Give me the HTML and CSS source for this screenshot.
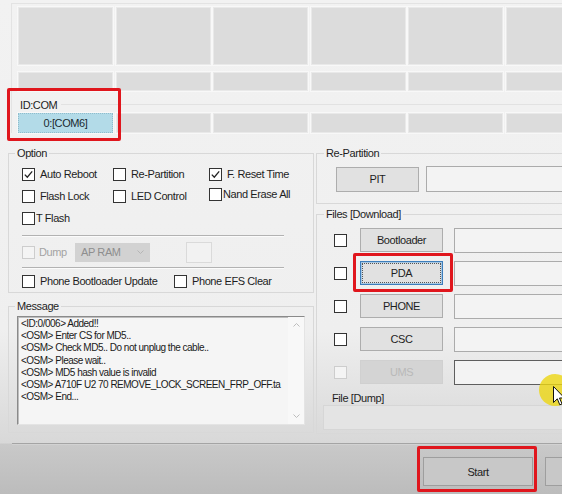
FILE: index.html
```html
<!DOCTYPE html>
<html>
<head>
<meta charset="utf-8">
<link rel="stylesheet" href="styles.css">
</head>
<body>
<div class="window">
  <section class="devices">
    <div class="dev-grid">
      <div class="cell"></div><div class="cell"></div><div class="cell"></div><div class="cell"></div><div class="cell"></div><div class="cell"></div>
      <div class="cell"></div><div class="cell"></div><div class="cell"></div><div class="cell"></div><div class="cell"></div><div class="cell"></div>
    </div>
    <div class="idcom-head"><span>ID:COM</span><span class="line"></span></div>
    <div class="com-grid">
      <div class="cell com-active">0:[COM6]</div><div class="cell"></div><div class="cell"></div><div class="cell"></div><div class="cell"></div><div class="cell"></div>
    </div>
  </section>

  <div class="lower">
    <div class="col-left">
      <fieldset class="grp option">
        <legend>Option</legend>
        <div class="opt-grid">
          <label class="chk"><span class="cb"><svg viewBox="0 0 11 11"><path d="M1.8 5.6 L4.3 8.2 L9.2 2.4"/></svg></span>Auto Reboot</label>
          <label class="chk"><span class="cb"></span>Re-Partition</label>
          <label class="chk"><span class="cb"><svg viewBox="0 0 11 11"><path d="M1.8 5.6 L4.3 8.2 L9.2 2.4"/></svg></span>F. Reset Time</label>
          <label class="chk"><span class="cb"></span>Flash Lock</label>
          <label class="chk"><span class="cb"></span>LED Control</label>
          <label class="chk tight up"><span class="cb"></span>Nand Erase All</label>
          <label class="chk tight"><span class="cb"></span>T Flash</label>
        </div>
        <div class="sep"></div>
        <div class="dump-row">
          <span class="cb disabled"></span>
          <span class="dump-label">Dump</span>
          <span class="select">AP RAM<svg class="sel-arrow" viewBox="0 0 7 4"><path d="M0.5 0.5 L3.5 3.5 L6.5 0.5"/></svg></span>
          <span class="small-box"></span>
        </div>
        <div class="sep sep2"></div>
        <div class="phone-row">
          <label class="chk pbu"><span class="cb"></span>Phone Bootloader Update</label>
          <label class="chk"><span class="cb"></span>Phone EFS Clear</label>
        </div>
      </fieldset>

      <fieldset class="grp message">
        <legend>Message</legend>
        <div class="log">
          <div class="log-text">
            <div>&lt;ID:0/006&gt; Added!!</div>
            <div>&lt;OSM&gt; Enter CS for MD5..</div>
            <div>&lt;OSM&gt; Check MD5.. Do not unplug the cable..</div>
            <div>&lt;OSM&gt; Please wait..</div>
            <div>&lt;OSM&gt; MD5 hash value is invalid</div>
            <div>&lt;OSM&gt; A710F U2 70 REMOVE_LOCK_SCREEN_FRP_OFF.ta</div>
            <div>&lt;OSM&gt; End...</div>
          </div>
          <div class="log-scroll">
            <svg viewBox="0 0 7 4"><path d="M0.5 3.5 L3.5 0.5 L6.5 3.5"/></svg>
            <svg viewBox="0 0 7 4"><path d="M0.5 0.5 L3.5 3.5 L6.5 0.5"/></svg>
          </div>
        </div>
      </fieldset>
    </div>

    <div class="col-right">
      <fieldset class="grp repart">
        <legend>Re-Partition</legend>
        <div class="pit-row">
          <button class="btn file-btn">PIT</button>
          <span class="field pit-field"></span>
        </div>
      </fieldset>

      <fieldset class="grp files">
        <legend>Files [Download]</legend>
        <div class="file-rows">
          <div class="file-row"><span class="cb"></span><button class="btn file-btn">Bootloader</button><span class="field"></span></div>
          <div class="file-row"><span class="cb"></span><button class="btn file-btn focused">PDA</button><span class="field"></span></div>
          <div class="file-row"><span class="cb"></span><button class="btn file-btn">PHONE</button><span class="field"></span></div>
          <div class="file-row"><span class="cb"></span><button class="btn file-btn">CSC</button><span class="field"></span></div>
          <div class="file-row"><span class="cb disabled"></span><button class="btn file-btn off">UMS</button><span class="field dark"></span></div>
        </div>
        <div class="dump-title">File [Dump]</div>
        <div class="dump-field"></div>
      </fieldset>
    </div>
  </div>

  <div class="bottom-line"></div>
  <div class="bottom">
    <button class="btn big">Start</button>
    <button class="btn big"></button>
  </div>

  <div class="mark mark-com"></div>
  <div class="mark mark-pda"></div>
  <div class="mark mark-start"></div>
  <div class="halo"></div>
  <svg class="pointer" viewBox="0 0 12 20"><path d="M0.5 0.5 L0.5 16.5 L4.3 12.8 L6.8 18.8 L9 17.9 L6.5 12 L11.5 12 Z"/></svg>
</div>
</body>
</html>
```

FILE: styles.css
```css
* { box-sizing: border-box; }
html, body { margin: 0; padding: 0; }
body {
  width: 562px;
  height: 494px;
  overflow: hidden;
  font-family: "Liberation Sans", Arial, sans-serif;
  font-size: 11px;
  letter-spacing: -0.4px;
  color: #1e1e1e;
  background: linear-gradient(to bottom, #f2f2f2 0, #efefef 330px, #d8d8d8 443px, #c9c9c9 444px, #bcbcbc 494px);
}
.window { position: relative; width: 562px; height: 494px; overflow: hidden; }

/* device slots */
.devices {
  margin: 3px 0 0 11px;
  border-top: 1px solid #e3e3e3;
  border-left: 1px solid #e3e3e3;
  padding: 3px 0 0 6px;
}
.dev-grid {
  display: grid;
  grid-template-columns: repeat(6, 95px);
  grid-template-rows: 58px 19px;
  column-gap: 2.5px;
  row-gap: 7px;
}
.cell {
  background: #dcdcdc;
  border: 1px solid #e9e9e9;
  box-shadow: 0 0 0 1px #f8f8f8;
}
.idcom-head {
  display: flex;
  align-items: center;
  height: 13px;
  margin-top: 7px;
  padding-left: 2px;
}
.idcom-head .line { flex: 1; border-top: 1px solid #e2e2e2; margin-left: 4px; }
.com-grid {
  display: grid;
  grid-template-columns: repeat(6, 95px);
  column-gap: 2.5px;
  height: 20px;
  margin-top: 2px;
}
.com-active {
  background: #b3dbe8;
  border: 1px dotted #8fbccc;
  display: flex;
  align-items: center;
  justify-content: center;
  color: #1a2a30;
}

/* lower area */
.lower {
  display: flex;
  gap: 2px;
  margin-top: 14px;
  padding-left: 8px;
}
.col-left { width: 306px; flex: none; }
.col-right { width: 270px; flex: none; }

fieldset.grp {
  margin: 0;
  padding: 0;
  min-width: 0;
  border: 1px solid #d8d8d8;
}
fieldset.grp > legend {
  padding: 0 2px;
  margin-left: 6px;
  height: 13px;
  line-height: 13px;
}
.col-right fieldset.grp > legend { margin-left: 7px; }

/* checkboxes */
.chk { display: flex; align-items: center; gap: 5px; white-space: nowrap; }
.chk.tight { gap: 1px; }
.chk.up { margin-top: -4px; }
.cb {
  width: 13px;
  height: 13px;
  flex: none;
  border: 1px solid #333;
  background: #fff;
  display: flex;
}
.cb svg { width: 11px; height: 11px; fill: none; stroke: #222; stroke-width: 1.3; }
.cb.disabled { border-color: #cdcdcd; background: #f4f4f4; }

/* option */
.opt-grid {
  display: grid;
  grid-template-columns: 91px 96px 1fr;
  grid-auto-rows: 22px;
  padding: 3px 0 0 13px;
}
.sep {
  margin: 6px 0 0 13px;
  width: 262px;
  border-top: 1px solid #b2b2b2;
  border-bottom: 1px solid #fbfbfb;
}
.sep2 { margin-top: 4px; }
.dump-row {
  display: flex;
  align-items: center;
  height: 22px;
  margin-top: 4px;
  padding-left: 13px;
  color: #a3a3a3;
}
.dump-label { width: 40px; padding-left: 4px; }
.select {
  position: relative;
  width: 75px;
  height: 19px;
  background: #d2d2d2;
  color: #8e8e8e;
  display: flex;
  align-items: center;
  padding-left: 6px;
}
.sel-arrow {
  width: 7px;
  height: 4px;
  margin-left: auto;
  margin-right: 6px;
  fill: none;
  stroke: #b5b5b5;
  stroke-width: 1;
}
.small-box {
  width: 26px;
  height: 21px;
  margin-left: 36px;
  border: 1px solid #dadada;
  background: #f2f2f2;
}
.phone-row {
  display: flex;
  align-items: center;
  height: 20px;
  margin: 2px 0 1px;
  padding-left: 13px;
}
.pbu { width: 152px; }

/* message */
.message { margin-top: 7px !important; }
.log {
  display: flex;
  margin: 3px 0 7px 8px;
  width: 288px;
  height: 109px;
  background: #f5f5f5;
  border: 1px solid;
  border-color: #8a8a8a #e4e4e4 #e4e4e4 #8a8a8a;
  box-shadow: inset 1px 1px 0 #bdbdbd;
}
.log-text {
  flex: 1;
  min-width: 0;
  padding: 1px 0 0 3px;
  font-size: 10px;
  line-height: 12.2px;
  letter-spacing: -0.5px;
  white-space: nowrap;
  color: #1a1a1a;
}
.log-scroll {
  width: 16px;
  flex: none;
  display: flex;
  flex-direction: column;
  justify-content: space-between;
  align-items: center;
  padding: 6px 0 6px;
  background: #f8f8f8;
}
.log-scroll svg { width: 7px; height: 4px; fill: none; stroke: #bdbdbd; stroke-width: 1; }

/* buttons and fields */
.btn {
  font: inherit;
  letter-spacing: inherit;
  color: #1e1e1e;
  background: #e1e1e1;
  border: 1px solid #adadad;
  padding: 0;
  margin: 0;
  display: flex;
  align-items: center;
  justify-content: center;
}
.file-btn { width: 83px; height: 24px; flex: none; }
.file-btn.focused {
  border-color: #3d7ebc;
  box-shadow: inset 0 0 0 1px #a9c8e2;
  outline: 1px dotted #555;
  outline-offset: -3px;
}
.file-btn.off { background: #d4d4d4; border-color: #d0d0d0; color: #b9b9b9; }
.field {
  flex: 1;
  height: 25px;
  background: #f3f3f3;
  border: 1px solid #ababab;
}
.field.dark { border-color: #5e5e5e; margin-left: -1px; }

.pit-row {
  display: flex;
  align-items: center;
  padding: 6px 0 11px 19px;
}
.pit-row .file-btn { height: 25px; }
.pit-field { margin-left: 7px; height: 26px; }

.files { margin-top: 4px !important; }
.file-rows {
  display: grid;
  grid-auto-rows: 24px;
  row-gap: 9px;
  padding: 7px 0 0 17px;
}
.file-row { display: flex; align-items: center; }
.file-row .cb { margin-right: 13px; }
.file-row .field { margin-left: 11px; }
.dump-title {
  margin-top: 8px;
  padding-left: 15px;
  height: 13px;
  line-height: 13px;
}
.dump-field {
  margin: 0 0 3px 6px;
  height: 25px;
  background: #e4e4e4;
  border: 1px solid #d6d6d6;
}

/* bottom */
.bottom-line {
  margin: 9px 0 0 12px;
  border-top: 1px solid #a4a4a4;
  border-bottom: 1px solid #d2d2d2;
}
.bottom {
  display: flex;
  gap: 12px;
  padding: 12px 0 0 423px;
}
.btn.big {
  width: 110px;
  height: 29px;
  flex: none;
  background: #c8c8c8;
  border-color: #9e9e9e;
  color: #222;
}

/* annotations */
.mark {
  position: absolute;
  border: 3px solid #e0161d;
  border-radius: 2px;
}
.mark-com { left: 7px; top: 88px; width: 114px; height: 53px; }
.mark-pda { left: 353px; top: 253px; width: 100px; height: 39px; }
.mark-start { left: 417px; top: 446px; width: 120px; height: 46px; }
.halo {
  position: absolute;
  left: 539px;
  top: 374px;
  width: 32px;
  height: 32px;
  border-radius: 50%;
  background: rgba(236, 214, 18, 0.8);
}
.pointer {
  position: absolute;
  left: 553px;
  top: 386px;
  width: 12px;
  height: 20px;
  fill: #fff;
  stroke: #111;
  stroke-width: 1;
}
```
